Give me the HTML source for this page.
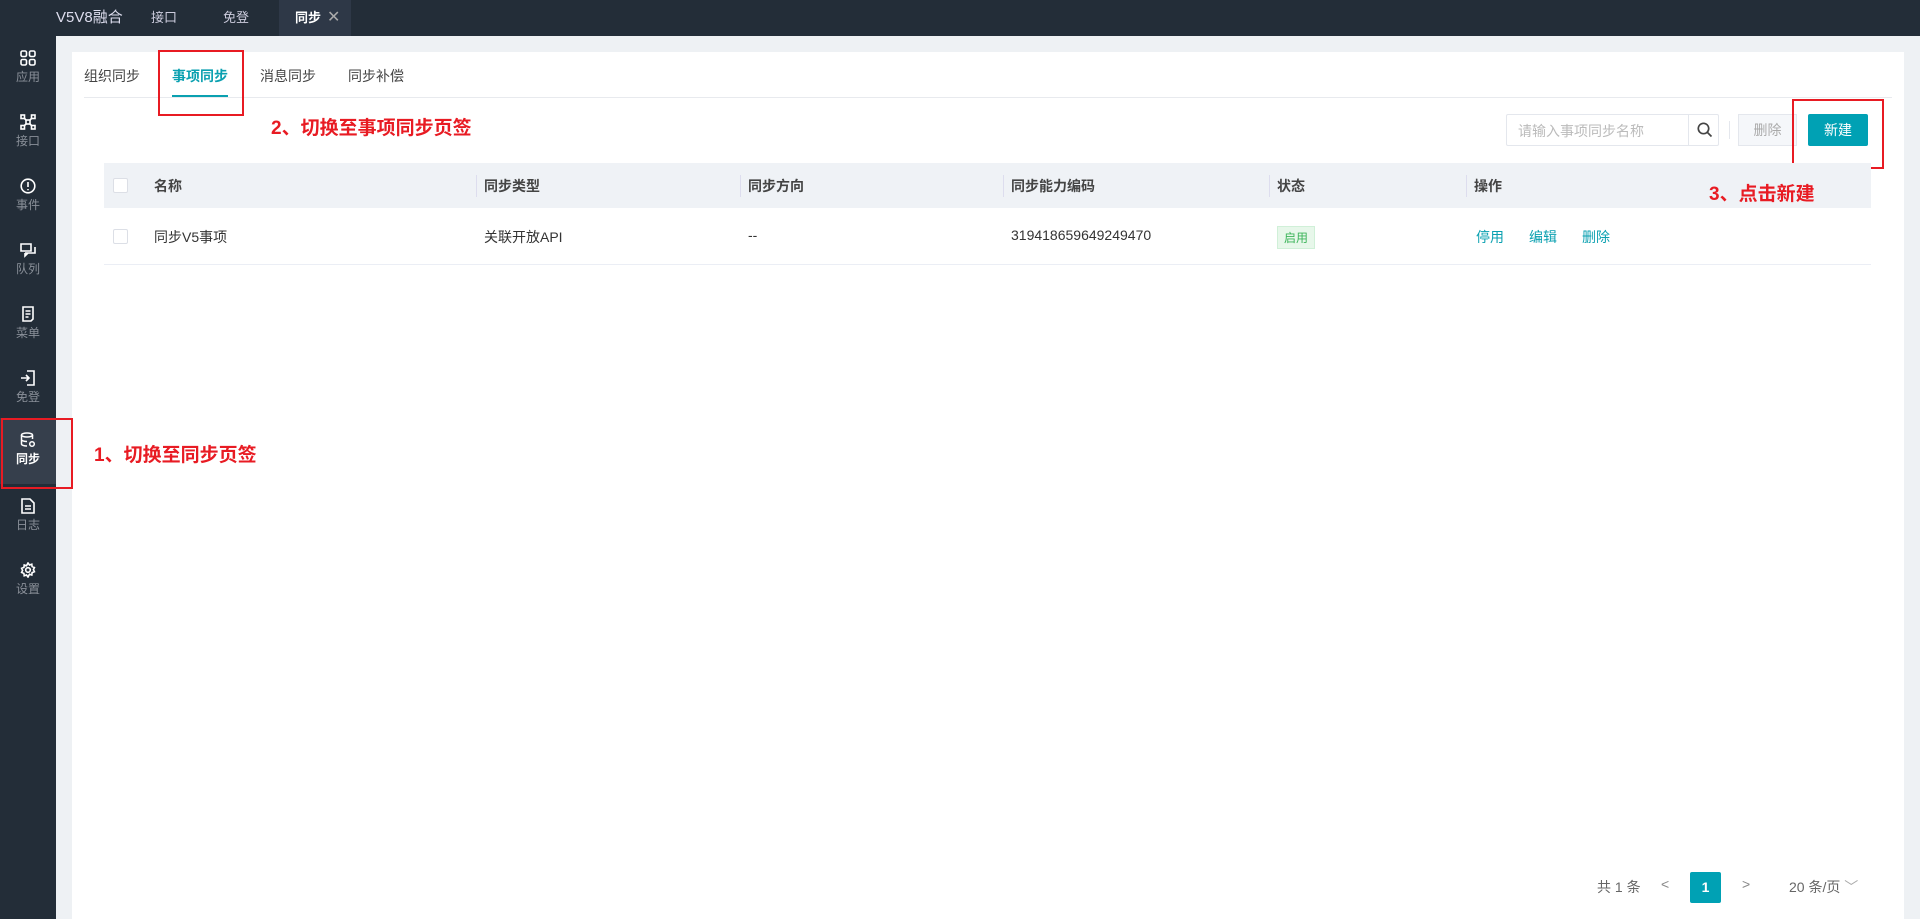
<!DOCTYPE html>
<html><head><meta charset="utf-8"><style>
*{margin:0;padding:0;box-sizing:border-box}
body{width:1920px;height:919px;overflow:hidden;background:#eef1f4;font-family:"Liberation Sans","Noto Sans CJK SC",sans-serif;font-size:14px;color:#333;position:relative}
.abs{position:absolute}
.top{left:0;top:0;width:1920px;height:36px;background:#232d38}
.top span{position:absolute;top:0;line-height:36px;color:#ccd;font-size:13px}
.side{left:0;top:36px;width:56px;height:883px;background:#232d38}
.si{position:absolute;left:0;width:56px;height:64px;text-align:center;color:#8a9099;font-size:12px}
.si svg{display:block;margin:14px auto 2px}
.panel{left:72px;top:52px;width:1832px;height:867px;background:#fff}
.tab{position:absolute;top:66px;font-size:14px;color:#444}
.th{left:104px;top:163px;width:1767px;height:45px;background:#eff2f6}
.th span,.row span{position:absolute;font-size:14px}
.th span{top:13px;font-weight:bold;color:#444}
.sep{position:absolute;top:12px;width:1px;height:22px;background:#dde}
.cb{position:absolute;width:15px;height:15px;border:1px solid #dcdfe6;background:#fff;border-radius:2px}
.red{color:#e81b23;font-weight:bold;font-size:19px}
.box{border:2px solid #e81b23}
.lnk{color:#0aa0b0}
</style></head><body>
<div class="abs top">
<span style="left:56px;font-size:15px;color:#dde">V5V8融合</span>
<span style="left:151px">接口</span>
<span style="left:223px">免登</span>
<div class="abs" style="left:279px;top:0;width:72px;height:36px;background:#2e3847"></div>
<span style="left:295px;color:#fff;font-weight:bold">同步</span>
<span style="left:327px;color:#aaa;font-size:16px">✕</span>
</div>
<div class="abs side">
<div class="si" style="top:0"><svg width="16" height="16" viewBox="0 0 16 16" fill="none" stroke="#fff" stroke-width="1.6"><rect x="1" y="1" width="5.5" height="5.5" rx="1.5"/><rect x="9.5" y="1" width="5.5" height="5.5" rx="1.5"/><rect x="1" y="9.5" width="5.5" height="5.5" rx="1.5"/><rect x="9.5" y="9.5" width="5.5" height="5.5" rx="1.5"/></svg>应用</div>
<div class="si" style="top:64px"><svg width="16" height="16" viewBox="0 0 16 16" fill="none" stroke="#fff" stroke-width="1.6"><rect x="1" y="1" width="3.5" height="3.5"/><rect x="11.5" y="1" width="3.5" height="3.5"/><rect x="1" y="11.5" width="3.5" height="3.5"/><rect x="11.5" y="11.5" width="3.5" height="3.5"/><rect x="6" y="6" width="4" height="4"/><path d="M4 4l2 2M12 4l-2 2M4 12l2-2M12 12l-2-2"/></svg>接口</div>
<div class="si" style="top:128px"><svg width="16" height="16" viewBox="0 0 16 16" fill="none" stroke="#fff" stroke-width="1.6"><circle cx="8" cy="8" r="6.8"/><path d="M8 4v5M8 11v1.2"/></svg>事件</div>
<div class="si" style="top:192px"><svg width="16" height="16" viewBox="0 0 16 16" fill="none" stroke="#fff" stroke-width="1.6"><path d="M1 2h10v7H1zM5 11h10V5M5 11v3l3-3"/></svg>队列</div>
<div class="si" style="top:256px"><svg width="16" height="16" viewBox="0 0 16 16" fill="none" stroke="#fff" stroke-width="1.6"><path d="M3 1h10v12l-2 2H3zM5.5 5h5M5.5 8h5M5.5 11h3"/></svg>菜单</div>
<div class="si" style="top:320px"><svg width="16" height="16" viewBox="0 0 16 16" fill="none" stroke="#fff" stroke-width="1.6"><path d="M7 1h7v14H7M1 8h8M6 5l3 3-3 3"/></svg>免登</div>
<div class="si" style="top:382px;height:66px;background:#363f4c;color:#fff;font-weight:bold"><svg width="16" height="16" viewBox="0 0 16 16" fill="none" stroke="#fff" stroke-width="1.5"><ellipse cx="7" cy="3" rx="5.5" ry="2"/><path d="M1.5 3v9c0 1.2 2.5 2 5.5 2M12.5 3v4M1.5 7.5c0 1.2 2.5 2 5.5 2"/><circle cx="12" cy="12" r="2.3"/></svg>同步</div>
<div class="si" style="top:448px"><svg width="16" height="16" viewBox="0 0 16 16" fill="none" stroke="#fff" stroke-width="1.6"><path d="M2 1h8l4 4v10H2zM5 8h6M5 11h6"/></svg>日志</div>
<div class="si" style="top:512px"><svg width="16" height="16" viewBox="0 0 16 16" fill="none" stroke="#fff" stroke-width="1.6"><circle cx="8" cy="8" r="2.3"/><path d="M8 1l1.5 2 2.3-.8.3 2.4 2.3.9-1 2.1 1 2.1-2.3.9-.3 2.4-2.3-.8L8 15l-1.5-2-2.3.8-.3-2.4-2.3-.9 1-2.1-1-2.1 2.3-.9.3-2.4 2.3.8z"/></svg>设置</div>
</div>
<div class="abs panel"></div>
<div class="tab" style="left:84px">组织同步</div>
<div class="tab" style="left:172px;color:#0aa0b0;font-weight:bold">事项同步</div>
<div class="abs" style="left:172px;top:95px;width:56px;height:3px;background:#0aa0b0"></div>
<div class="tab" style="left:260px">消息同步</div>
<div class="tab" style="left:348px">同步补偿</div>
<div class="abs" style="left:84px;top:97px;width:1808px;height:1px;background:#e8eaee"></div>
<div class="abs box" style="left:158px;top:50px;width:86px;height:66px"></div>
<div class="abs red" style="left:271px;top:113px">2、切换至事项同步页签</div>
<div class="abs" style="left:1506px;top:114px;width:213px;height:32px;border:1px solid #e4e7ed;border-radius:2px;background:#fff"></div>
<div class="abs" style="left:1518px;top:121px;color:#bbb;font-size:14px">请输入事项同步名称</div>
<div class="abs" style="left:1688px;top:114px;width:1px;height:32px;background:#e4e7ed"></div>
<svg class="abs" style="left:1696px;top:121px" width="18" height="18" viewBox="0 0 18 18" fill="none" stroke="#444" stroke-width="1.7"><circle cx="7.5" cy="7.5" r="5.2"/><path d="M11.5 11.5l4 4"/></svg>
<div class="abs" style="left:1729px;top:121px;width:1px;height:18px;background:#e4e7ed"></div>
<div class="abs" style="left:1738px;top:114px;width:59px;height:32px;border:1px solid #e4e7ed;background:#f5f7fa;color:#aaa;text-align:center;line-height:30px">删除</div>
<div class="abs" style="left:1808px;top:114px;width:60px;height:32px;background:#00a1b4;color:#fff;text-align:center;line-height:32px;border-radius:2px">新建</div>
<div class="abs box" style="left:1792px;top:99px;width:92px;height:70px"></div>
<div class="abs th">
<div class="cb" style="left:9px;top:15px"></div>
<span style="left:50px">名称</span>
<div class="sep" style="left:372px"></div><span style="left:380px">同步类型</span>
<div class="sep" style="left:636px"></div><span style="left:644px">同步方向</span>
<div class="sep" style="left:899px"></div><span style="left:907px">同步能力编码</span>
<div class="sep" style="left:1165px"></div><span style="left:1173px">状态</span>
<div class="sep" style="left:1362px"></div><span style="left:1370px">操作</span>
</div>
<div class="abs red" style="left:1709px;top:179px">3、点击新建</div>
<div class="abs row" style="left:104px;top:208px;width:1767px;height:57px;border-bottom:1px solid #ebeef5">
<div class="cb" style="left:9px;top:21px"></div>
<span style="left:50px;top:19px">同步V5事项</span>
<span style="left:380px;top:19px">关联开放API</span>
<span style="left:644px;top:19px">--</span>
<span style="left:907px;top:19px">319418659649249470</span>
<span style="left:1173px;top:18px;background:#e7f7ea;color:#3cb45a;font-size:12px;padding:2px 6px;border:1px solid #d0f0d8">启用</span>
<span class="lnk" style="left:1372px;top:19px">停用</span>
<span class="lnk" style="left:1425px;top:19px">编辑</span>
<span class="lnk" style="left:1478px;top:19px">删除</span>
</div>
<div class="abs box" style="left:1px;top:418px;width:72px;height:71px"></div>
<div class="abs red" style="left:94px;top:440px">1、切换至同步页签</div>
<div class="abs" style="left:1597px;top:877px;color:#666">共 1 条</div>
<div class="abs" style="left:1661px;top:876px;color:#888">&lt;</div>
<div class="abs" style="left:1690px;top:872px;width:31px;height:31px;background:#00a1b4;color:#fff;text-align:center;line-height:31px;font-weight:bold;border-radius:2px">1</div>
<div class="abs" style="left:1742px;top:876px;color:#888">&gt;</div>
<div class="abs" style="left:1789px;top:877px;color:#666">20 条/页 <span style="color:#aaa">﹀</span></div>
</body></html>
